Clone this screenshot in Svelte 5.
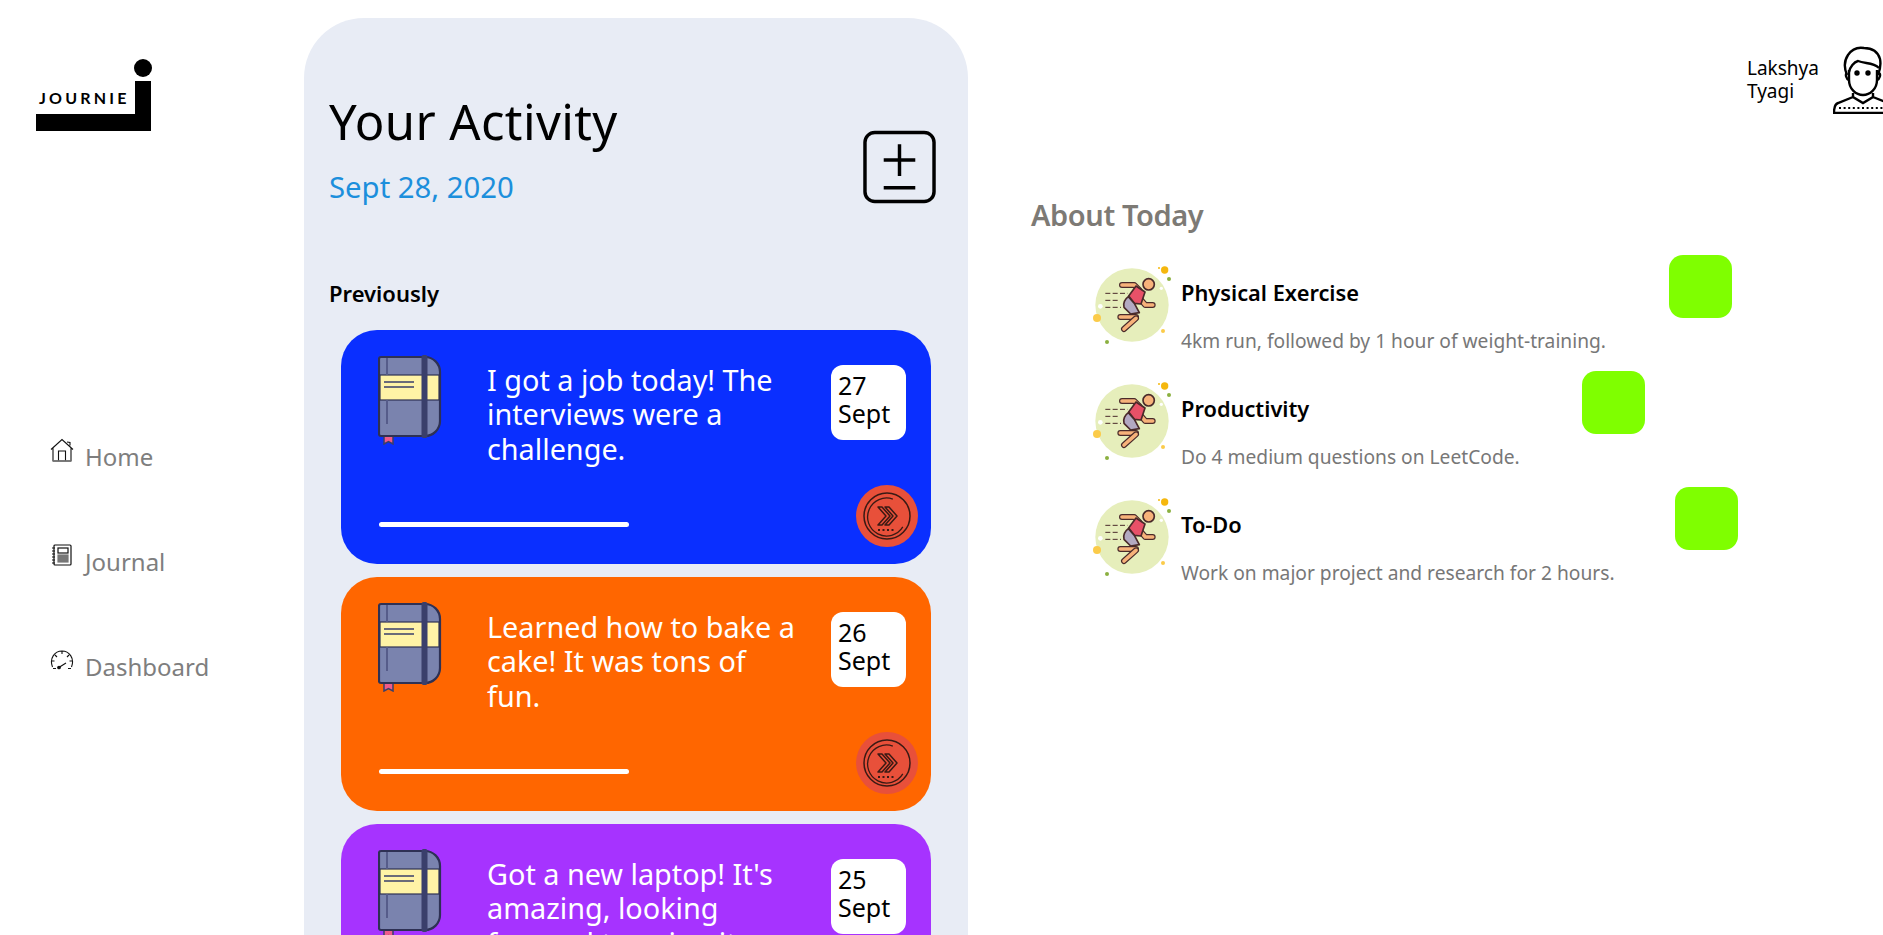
<script>
  const cards = [
    { cls: 'blue', text: 'I got a job today! The interviews were a challenge.', d: '27' },
    { cls: 'orange', text: 'Learned how to bake a cake! It was tons of fun.', d: '26' },
    { cls: 'purple', text: "Got a new laptop! It's amazing, looking forward to using it.", d: '25' }
  ];
  const items = [
    { title: 'Physical Exercise', desc: '4km run, followed by 1 hour of weight-training.', w: 426 },
    { title: 'Productivity', desc: 'Do 4 medium questions on LeetCode.', w: 339 },
    { title: 'To-Do', desc: 'Work on major project and research for 2 hours.', w: 432 }
  ];
</script>

<div class="page">
  <aside class="side">
    <div class="logo">
      <span class="logo-text">JOURNIE</span>
      <span class="logo-dot"></span>
      <span class="logo-stem"></span>
      <span class="logo-base"></span>
    </div>
    <nav class="nav">
      <a class="nav-item">
        <svg width="24" height="24" viewBox="0 0 24 24" fill="none" stroke="#111" stroke-width="1.1"><path d="M1 11.500 12 1.500 23 11.500M3 9.500V23h18V9.500M8.500 23V13h7v10M17 4l3 .5v3"/><path d="M3 23h18" stroke="#777" stroke-width="1.600"/></svg>
        <span>Home</span>
      </a>
      <a class="nav-item">
        <svg width="24" height="24" viewBox="0 0 24 24" fill="none" stroke="#111" stroke-width="1.2"><rect x="4" y="2" width="17" height="20" rx="1"/><rect x="8" y="5" width="10" height="5"/><rect x="8" y="12" width="10" height="7" fill="#777" stroke="#777"/><path d="M2 5h3M2 8h3M2 11h3M2 14h3M2 17h3M2 20h3"/></svg>
        <span>Journal</span>
      </a>
      <a class="nav-item">
        <svg width="24" height="24" viewBox="0 0 24 24" fill="none" stroke="#111" stroke-width="1.1"><path d="M2.500 19C-1 10 5 3 12 3s13 7 9.500 16M12 3v3M5 7l2 2M19 7l-2 2M1.500 13h3M22.500 13h-3M8 20l8-5"/><circle cx="9" cy="19.500" r="1.300" fill="#111"/><path d="M3 20.500h3M18 20.500h3"/></svg>
        <span>Dashboard</span>
      </a>
    </nav>
  </aside>

  <main class="panel">
    <div class="panel-head">
      <div>
        <h1>Your Activity</h1>
        <div class="date">Sept 28, 2020</div>
      </div>
      <svg class="add" width="73" height="74" viewBox="0 0 74 74" fill="none" stroke="#000" stroke-width="3.500"><rect x="2" y="2" width="70" height="70" rx="10"/><path d="M37 14v32M21 30h32M21 58h32"/></svg>
    </div>
    <div class="prev">Previously</div>
    <div class="cards">
      {#each cards as c}
        <article class="card {c.cls}">
          <div class="card-top">
            <svg class="book" width="64" height="90" viewBox="0 0 64 90">
              <path d="M6 80h9v9l-4.500-2.500L6 89z" fill="#ef5b8a" stroke="#3a3f6b" stroke-width="1.500"/>
              <path d="M3 2h44a15 15 0 0 1 15 15v49a15 15 0 0 1-15 15H3a2 2 0 0 1-2-2V4a2 2 0 0 1 2-2z" fill="#7a83ae" stroke="#2e3154" stroke-width="2.200"/>
              <rect x="2" y="20" width="59" height="25" fill="#fff3a6" stroke="#2e3154" stroke-width="1.200"/>
              <path d="M6 27h30M6 32h30" stroke="#3a3f6b" stroke-width="1.500"/>
              <path d="M9 3v17M9 45v24" stroke="#565c8a" stroke-width="2"/>
              <rect x="43.500" y="0" width="6" height="83" rx="2" fill="#3a3f6b"/>
            </svg>
            <p class="text">{c.text}</p>
            <div class="day">{c.d}<br />Sept</div>
          </div>
          <div class="card-foot">
            <div class="bar"></div>
            <svg class="go" width="62" height="62" viewBox="0 0 62 62" fill="none" stroke="#3a1a14">
              <circle cx="31" cy="31" r="31" fill="#e8503a" stroke="none"/>
              <circle cx="31" cy="31" r="23" stroke-width="1.500"/>
              <path d="M38 14.500A19 19 0 1 0 46 43" stroke-width="1.300" transform="rotate(-4 31 31)"/>
              <path d="M22 45h18" stroke-width="2" stroke-dasharray="2 2.500"/>
              <path d="M22 22l8 9-8 9h4l8-9-8-9zM29 22l8 9-8 9h4l8-9-8-9z" stroke-width="1.500" stroke-linejoin="round"/>
            </svg>
          </div>
        </article>
      {/each}
    </div>
  </main>

  <section class="right">
    <div class="user">
      <div class="uname">Lakshya<br />Tyagi</div>
      <svg class="avatar" width="60" height="68" viewBox="0 0 60 68" fill="none" stroke="#000" stroke-width="2.400">
        <path d="M14 29c-3-7-3-14 1-20 4-6 10-8 16-7 8 0 14 4 16 11 1 5 0 11-2 16"/>
        <path d="M16 26c1-5 5-10 9-11 7 3 15 1 21 7"/>
        <path d="M16 24v10c0 9 7 15 14 15s14-6 14-15V24"/>
        <path d="M14 27c-2 1-1 6 2 7M46 27c2 1 1 6-2 7"/>
        <path d="M20 47v4l10 6 10-6v-4M20 51L5 57c-3 1-4 4-4 10h60M40 51l15 6"/>
        <circle cx="24" cy="27" r="1.500" fill="#000"/>
        <circle cx="35" cy="27" r="1.500" fill="#000"/>
        <path d="M6 62h54" stroke-width="1.800" stroke-dasharray="2 2.600"/>
      </svg>
    </div>
    <h2>About Today</h2>
    <ul class="list">
      {#each items as it}
        <li class="item">
          <svg class="runner" width="84" height="90" viewBox="12 24 252 270">
            <circle cx="138" cy="150" r="110" fill="#e6eebb"/>
            <circle cx="236" cy="45" r="11" fill="#f5b70e"/>
            <circle cx="219" cy="39" r="3" fill="#f5b70e"/>
            <circle cx="249" cy="72" r="6" fill="#8bb040"/>
            <circle cx="226" cy="100" r="5" fill="#fff"/>
            <circle cx="43" cy="154" r="7" fill="#fff"/>
            <circle cx="33" cy="189" r="12" fill="#fbcb4a"/>
            <circle cx="231" cy="228" r="6" fill="#fbcb4a"/>
            <circle cx="63" cy="261" r="6" fill="#8bb040"/>
            <path d="M58 115h67M58 136h42M58 157h47" stroke="#4a2a2a" stroke-width="3" stroke-dasharray="15 7" fill="none"/>
            <g fill="none" stroke-linecap="round" stroke-linejoin="round">
              <path d="M108 90h37l15 15" stroke="#4a2a2a" stroke-width="18"/>
              <path d="M108 90h37l15 15" stroke="#f7b27a" stroke-width="11"/>
              <path d="M165 135l13 15h22" stroke="#4a2a2a" stroke-width="18"/>
              <path d="M165 135l13 15h22" stroke="#f7b27a" stroke-width="11"/>
              <path d="M150 93l27 18-12 36-20-2-17-22z" fill="#e85168" stroke="#4a2a2a" stroke-width="5"/>
              <path d="M127 125l18 20 15 28-26 4-20-20c-4-12 3-25 13-32z" fill="#b3a9c2" stroke="#4a2a2a" stroke-width="5"/>
              <path d="M103 186h47" stroke="#4a2a2a" stroke-width="18"/>
              <path d="M103 186h47" stroke="#f7b27a" stroke-width="11"/>
              <path d="M150 190l-36 32" stroke="#4a2a2a" stroke-width="18"/>
              <path d="M150 190l-36 32" stroke="#f7b27a" stroke-width="11"/>
              <circle cx="188" cy="88" r="17" fill="#f7b27a" stroke="#4a2a2a" stroke-width="5"/>
            </g>
          </svg>
          <div class="item-text" style="width:{it.w}px">
            <div class="title">{it.title}</div>
            <div class="desc">{it.desc}</div>
          </div>
          <div class="sq"></div>
        </li>
      {/each}
    </ul>
  </section>
</div>

<style>
  :global(body) { margin: 0; background: #fff; overflow: hidden; }
  .page {
    display: grid;
    grid-template-columns: 304px 664px 1fr;
    height: 935px;
    overflow: hidden;
    font-family: "Noto Sans", "Open Sans", sans-serif;
    color: #000;
  }
  .logo { position: relative; width: 115px; height: 72px; margin: 59px 0 0 36px; }
  .logo-text { position: absolute; left: 3px; top: 31px; font: 700 16px/1 Lato, sans-serif; letter-spacing: 3.200px; white-space: nowrap; }
  .logo-dot { position: absolute; left: 98px; top: 0; width: 18px; height: 18px; border-radius: 50%; background: #000; }
  .logo-stem { position: absolute; left: 99px; top: 22px; width: 16px; height: 50px; background: #000; }
  .logo-base { position: absolute; left: 0; top: 55px; width: 115px; height: 17px; background: #000; }
  .nav { display: flex; flex-direction: column; gap: 72px; margin: 309px 0 0 50px; }
  .nav-item { display: flex; align-items: flex-start; gap: 11px; color: #7e7e7e; font-size: 24px; line-height: 33px; }
  .nav-item svg { flex: none; margin-top: -2px; }
  .panel {
    margin-top: 18px;
    background: #e8ecf5;
    border-radius: 60px 60px 0 0;
    padding: 73px 0 0 25px;
    box-sizing: border-box;
    height: 1200px;
  }
  .panel-head { display: flex; justify-content: space-between; height: 163px; padding-right: 32px; }
  h1 { margin: 0; font-size: 49px; letter-spacing: .4px; font-weight: 400; line-height: 60px; }
  .date { margin-top: 17px; font-size: 29.300px; line-height: 38px; color: #1c8fdc; }
  .add { margin-top: 39px; }
  .prev { margin-top: 24px; font-size: 22px; line-height: 30px; font-weight: 600; }
  .cards { display: flex; flex-direction: column; gap: 13px; margin: 22px 0 0 12px; width: 590px; }
  .card { height: 234px; border-radius: 36px; color: #fff; box-sizing: border-box; flex: none; }
  .blue { background: #0a2fff; }
  .orange { background: #ff6600; }
  .purple { background: #a633ff; }
  .card-top { display: flex; align-items: flex-start; height: 155px; padding-left: 37px; }
  .book { flex: none; margin: 25px 45px 0 0; }
  .text { margin: 33px 32px 0 0; flex: none; width: 312px; font-size: 28.800px; line-height: 34.400px; }
  .day { flex: none; margin-top: 35px; width: 75px; height: 75px; box-sizing: border-box; padding: 7px 0 0 7px; background: #fff; color: #000; border-radius: 12px; font-size: 25px; line-height: 27.500px; }
  .card-foot { display: flex; align-items: flex-start; padding-left: 38px; }
  .bar { flex: none; margin-top: 37px; width: 250px; height: 5px; border-radius: 3px; background: #fff; }
  .go { flex: none; margin-left: 227px; }
  .right { position: relative; padding: 0 0 0 63px; }
  .user { position: absolute; left: 779px; top: 46px; display: flex; gap: 16px; align-items: flex-start; }
  .uname { width: 70px; margin-top: 11px; font-size: 19px; line-height: 23px; }
  h2 { margin: 195px 0 0; font-size: 29px; line-height: 40px; font-weight: 600; letter-spacing: -.4px; color: #7d7a75; }
  .list { list-style: none; margin: 28px 0 0; padding: 0 0 0 59px; display: flex; flex-direction: column; gap: 26px; }
  .item { display: flex; align-items: flex-start; height: 90px; }
  .runner { flex: none; margin-right: 7px; }
  .item-text { flex: none; padding-top: 14px; }
  .title { font-size: 21.800px; line-height: 32px; font-weight: 600; white-space: nowrap; }
  .desc { margin-top: 19px; font-size: 19.200px; line-height: 25px; color: #777; white-space: nowrap; }
  .sq { flex: none; width: 63px; height: 63px; margin: -8px 0 0 62px; border-radius: 14px; background: #7fff00; }
</style>
